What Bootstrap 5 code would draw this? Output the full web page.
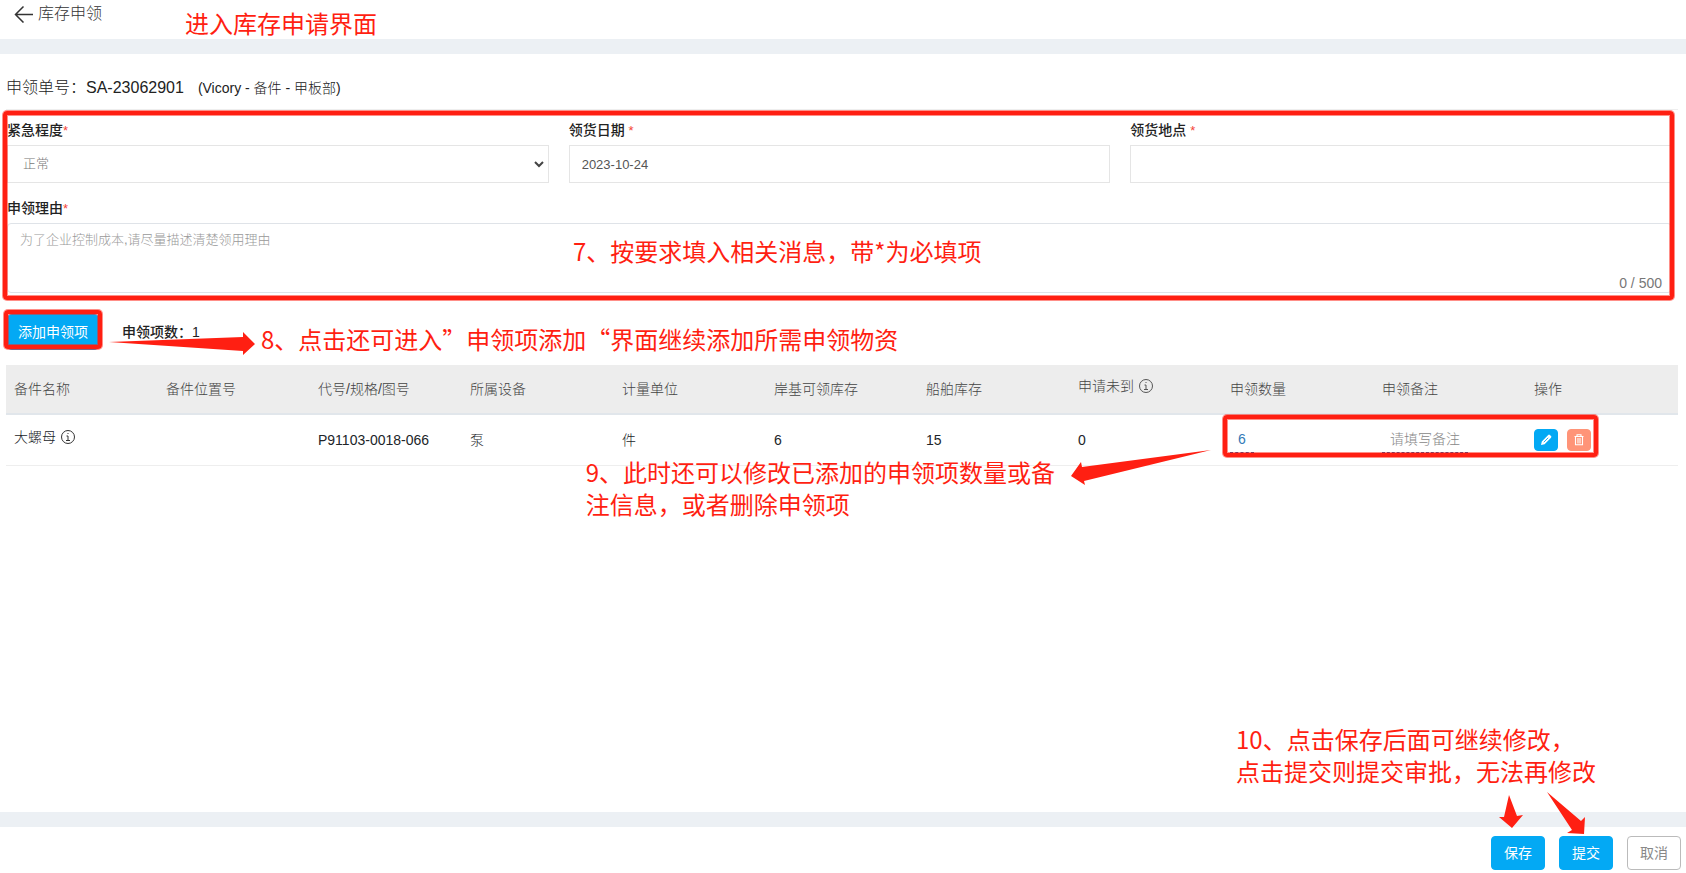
<!DOCTYPE html>
<html lang="zh-CN">
<head>
<meta charset="utf-8">
<meta name="viewport" content="width=device-width, initial-scale=1">
<title>库存申领</title>
<link href="https://cdn.jsdelivr.net/npm/bootstrap@5.3.0/dist/css/bootstrap.min.css" rel="stylesheet">
<style>
  :root { --mark-red: #ff1f12; --brand: #03a9f4; --band: #ecf0f4; }
  body { font-family: "Liberation Sans", "Noto Sans CJK SC", sans-serif; font-size: 14px; line-height: 20px; color: #212529; font-weight: 300; background: #fff; }
  .page-top { height: 54px; border-bottom: 15px solid var(--band); padding: 4px 14px; }
  .back-link { font-size: 16px; color: #333; text-decoration: none; line-height: 20px; }
  .page-main { padding: 0 8px 0 6px; }
  .order-line { height: 56px; padding-top: 24px; border-bottom: 1px solid #eee; font-size: 16px; color: #222; }
  .order-line small { font-size: 14px; margin-left: 14px; }
  .apply-form { padding: 10px 6px 0 1px; margin-bottom: 21px; }
  .field-title { font-weight: 500; color: #222; line-height: 20px; margin-bottom: 4px; display: block; }
  .field-title span { color: #f44336; font-size: 13px; font-weight: 400; }
  .reason-title { margin-top: 15px; }
  .form-grid { --bs-gutter-x: 20px; }
  .apply-form .form-control, .apply-form .form-select { height: 38px; border: 1px solid #e5e5e5; border-radius: 0; font-size: 13px; color: #555; padding: 6px 12px; font-weight: 300; }
  .apply-form .form-select { padding-left: 15px; color: #777; background-size: 10px 8px; background-position: right 4px center;
    background-image: url("data:image/svg+xml,%3csvg xmlns='http://www.w3.org/2000/svg' viewBox='0 0 10 8'%3e%3cpath fill='none' stroke='%23444' stroke-width='2' d='M1 2l4 4 4-4'/%3e%3c/svg%3e"); }
  .apply-form textarea.form-control { height: 70px; resize: none; border-radius: 4px; border-color: #dfe3e8; display: block; }
  .apply-form .form-control::placeholder { color: #999; }
  .char-count { right: 10px; bottom: 0; color: #777; }
  .btn-brand { --bs-btn-bg: #03a9f4; --bs-btn-color: #fff; --bs-btn-hover-bg: #0398db; --bs-btn-hover-color: #fff; --bs-btn-border-color: #03a9f4; }
  .btn { font-size: 14px; line-height: 20px; font-weight: 400; }
  .add-btn { width: 94px; height: 36px; padding: 7px 0; }
  .item-count { font-weight: 500; color: #222; margin-left: 22px; }
  .part-table { table-layout: fixed; margin: 15px 0 0; border-color: #eee; }
  .part-table > thead th { background: #ededed; height: 49px; border-bottom: 2px solid #e1e6eb; font-weight: 300; color: #444; }
  .part-table td { height: 51px; color: #212529; font-weight: 300; }
  .part-table > :not(caption) > * > * { padding: 0 8px; vertical-align: middle; }
  .raised { display: inline-flex; align-items: center; gap: 5px; padding-bottom: 6px; }
  .inline-edit { border: 0; border-bottom: 1px dashed #1b4f9c; padding: 0 8px; height: 27px; background: none; color: #337ab7; font-weight: 300; display: block; }
  .inline-edit::placeholder { color: #888; }
  .edit-qty { width: 24px; }
  .edit-note { width: 86px; }
  .row-actions { gap: 9px; }
  .mini-btn { width: 24px; height: 22px; padding: 0; display: grid; place-items: center; border-radius: 4px; }
  .btn-remove { --bs-btn-bg: #ff9478; --bs-btn-border-color: #ff9478; --bs-btn-hover-bg: #f77f60; }
  .page-foot { border-top: 15px solid var(--band); padding: 9px 5px 3px; }
  .foot-actions { gap: 14px; }
  .page-foot .btn { width: 54px; height: 34px; padding: 6px 0; border-radius: 4px; }
  .btn-cancel { --bs-btn-color: #888; --bs-btn-border-color: #bbb; --bs-btn-hover-bg: #f4f4f4; }

  /* tutorial marks laid over the page */
  .note { position: absolute; z-index: 3; margin: 0; color: var(--mark-red); font: 400 24px/32px "Noto Sans CJK SC", sans-serif; white-space: nowrap; pointer-events: none; }
  .frame { position: absolute; z-index: 2; border: 4px solid var(--mark-red); border-radius: 4px; box-shadow: 0 0 0 1px #ff1f1280, inset 0 0 0 1px #ff1f1280; pointer-events: none; }
  .arrow { position: absolute; z-index: 3; fill: var(--mark-red); pointer-events: none; overflow: visible; }
  .note-title { left: 185px; top: 7px; }
  .frame-form { left: -3px; right: 4px; top: 1px; bottom: -7px; }
  .note-form { left: 567px; top: 125px; }
  .frame-add { left: -2px; top: -4px; width: 98px; height: 39px; }
  .arrow-add { left: 103px; top: 18px; }
  .note-add { left: 255px; top: 9px; }
  .frame-row { right: 80px; top: 50px; width: 375px; height: 42px; }
  .arrow-row { right: 467px; top: 85px; }
  .note-row { right: 623px; top: 91px; }
  .note-foot { right: 90px; bottom: 86px; }
  .arrow-save { right: 163px; bottom: 45px; }
  .arrow-submit { right: 101px; bottom: 39px; }
</style>
</head>
<body class="d-flex flex-column min-vh-100">
<header class="page-top position-relative">
  <a href="#" class="back-link d-inline-flex align-items-center gap-1">
    <svg width="20" height="18" viewBox="0 0 20 18" fill="none" stroke="#333" stroke-width="1.5" aria-hidden="true"><path d="M19 9.500H2M9.500 1.500l-8 8 8 8"/></svg>库存申领</a>
  <p class="note note-title">进入库存申请界面</p>
</header>

<main class="page-main flex-grow-1">
  <div class="order-line d-flex">
    <span>申领单号：</span><span>SA-23062901</span>
    <small>(Vicory - 备件 - 甲板部)</small>
  </div>

  <form class="apply-form position-relative">
    <div class="row form-grid">
      <div class="col-4">
        <label class="field-title" for="level">紧急程度<span>*</span></label>
        <select id="level" class="form-select"><option>正常</option><option>紧急</option></select>
      </div>
      <div class="col-4">
        <label class="field-title" for="day">领货日期 <span>*</span></label>
        <input id="day" class="form-control" type="text" value="2023-10-24">
      </div>
      <div class="col-4">
        <label class="field-title" for="place">领货地点 <span>*</span></label>
        <input id="place" class="form-control" type="text">
      </div>
    </div>
    <label class="field-title reason-title" for="reason">申领理由<span>*</span></label>
    <div class="position-relative">
      <textarea id="reason" class="form-control" maxlength="500" placeholder="为了企业控制成本,请尽量描述清楚领用理由"></textarea>
      <span class="char-count position-absolute">0 / 500</span>
    </div>
    <div class="frame frame-form"></div>
    <p class="note note-form">7、按要求填入相关消息，带*为必填项</p>
  </form>

  <div class="d-flex align-items-center position-relative">
    <button type="button" class="btn btn-brand add-btn">添加申领项</button>
    <span class="item-count">申领项数：1</span>
    <div class="frame frame-add"></div>
    <svg class="arrow arrow-add" width="146" height="23" viewBox="0 0 146 23"><path d="M0 10L134 5V0L146 12 134 23V19Z"/></svg>
    <p class="note note-add">8、点击还可进入”申领项添加“界面继续添加所需申领物资</p>
  </div>

  <div class="position-relative">
    <table class="table part-table">
      <thead>
        <tr>
          <th>备件名称</th><th>备件位置号</th><th>代号/规格/图号</th><th>所属设备</th><th>计量单位</th><th>岸基可领库存</th><th>船舶库存</th>
          <th><span class="raised">申请未到 <svg width="14" height="14" viewBox="0 0 14 14" fill="none" stroke="#555"><circle cx="7" cy="7" r="6.500"/><path d="M5.500 6H7v4M5 10.500h4M6.500 3.500h1"/></svg></span></th>
          <th>申领数量</th><th>申领备注</th><th>操作</th>
        </tr>
      </thead>
      <tbody>
        <tr>
          <td><span class="raised">大螺母 <svg width="14" height="14" viewBox="0 0 14 14" fill="none" stroke="#333"><circle cx="7" cy="7" r="6.500"/><path d="M5.500 6H7v4M5 10.500h4M6.500 3.500h1"/></svg></span></td>
          <td></td><td>P91103-0018-066</td><td>泵</td><td>件</td><td>6</td><td>15</td><td>0</td>
          <td><input class="inline-edit edit-qty" type="text" value="6" aria-label="申领数量"></td>
          <td><input class="inline-edit edit-note" type="text" placeholder="请填写备注" aria-label="申领备注"></td>
          <td>
            <div class="d-flex row-actions">
              <button type="button" class="btn btn-brand mini-btn" aria-label="修改"><svg width="12" height="12" viewBox="0 0 12 12"><path d="M1 11l.8-3.600L8.200 1a1.200 1.200 0 0 1 1.700 0l1.100 1.100a1.200 1.200 0 0 1 0 1.700L4.600 10.200Z" fill="#fff"/><path d="M3.800 8.200l4.400-4.400" stroke="#03a9f4" stroke-width=".9"/></svg></button>
              <button type="button" class="btn btn-remove mini-btn" aria-label="删除"><svg width="10" height="12" viewBox="0 0 10 12" fill="none" stroke="#fff"><path d="M.5 2.500h9M3 2V.7h4V2M1.500 2.500v8.300h7V2.500M4 4v5.500M6 4v5.500" stroke-width="1.100"/></svg></button>
            </div>
          </td>
        </tr>
      </tbody>
    </table>
    <div class="frame frame-row"></div>
    <svg class="arrow arrow-row" width="140" height="35" viewBox="0 0 140 35"><path d="M140 0L11 17 10 12 0 26 14 35 13 31Z"/></svg>
    <p class="note note-row">9、此时还可以修改已添加的申领项数量或备<br>注信息，或者删除申领项</p>
  </div>
</main>

<footer class="page-foot position-relative d-flex justify-content-end">
  <div class="d-flex foot-actions">
    <button type="button" class="btn btn-brand">保存</button>
    <button type="button" class="btn btn-brand">提交</button>
    <button type="button" class="btn btn-cancel">取消</button>
  </div>
  <p class="note note-foot">10、点击保存后面可继续修改，<br>点击提交则提交审批，无法再修改</p>
  <svg class="arrow arrow-save" width="24" height="33" viewBox="0 0 24 33"><path d="M10 0L18 21 24 20 13 33 0 22H5Z"/></svg>
  <svg class="arrow arrow-submit" width="38" height="42" viewBox="0 0 38 42"><path d="M0 0L34 29 38 25 37 42 20 41 25 38Z"/></svg>
</footer>
<script src="https://cdn.jsdelivr.net/npm/bootstrap@5.3.0/dist/js/bootstrap.bundle.min.js"></script>
</body>
</html>
